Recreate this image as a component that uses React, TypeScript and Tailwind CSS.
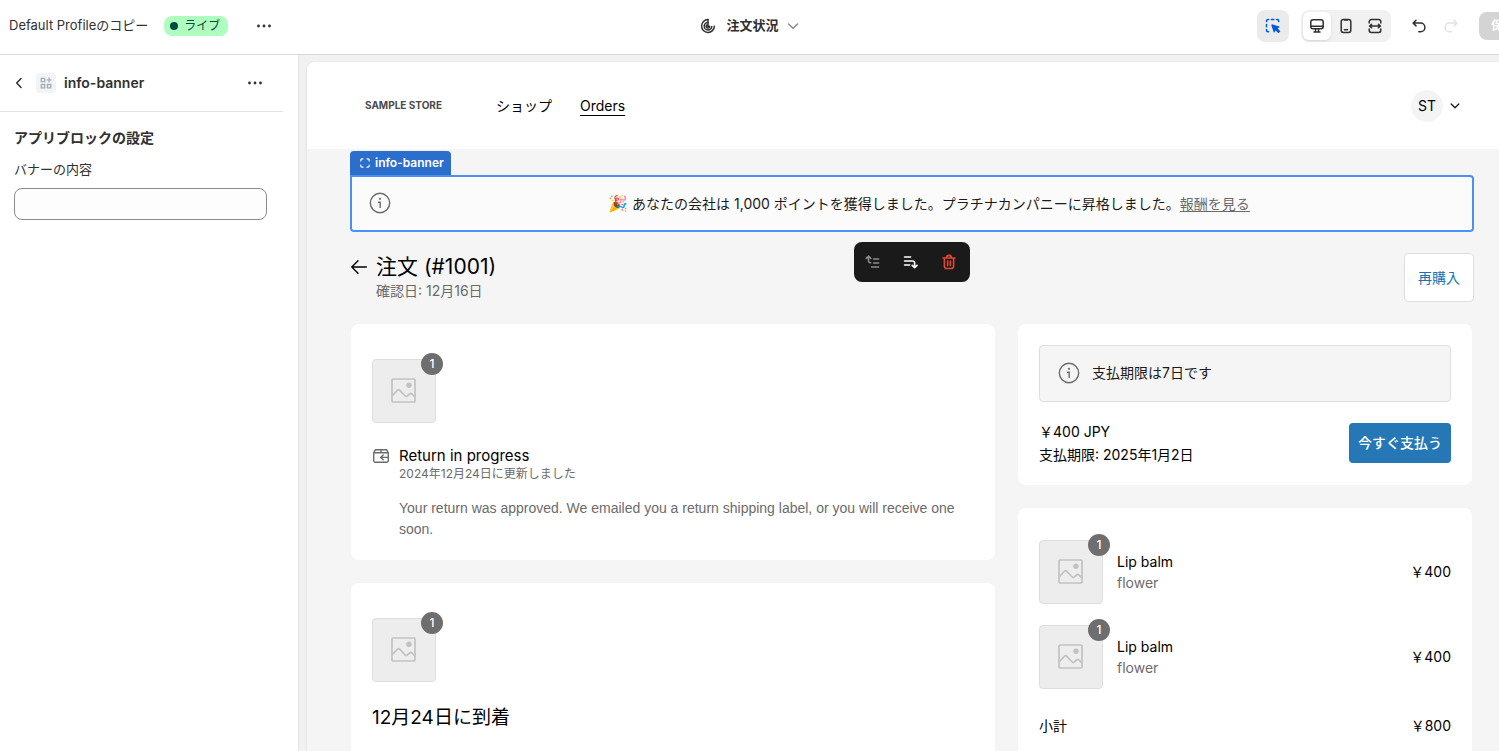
import type { ReactNode } from 'react'

interface IconProps {
  className?: string
}

interface LineItem {
  id: number
  name: string
  variant: string
  price: string
}

const LINE_ITEMS: LineItem[] = [
  { id: 1, name: 'Lip balm', variant: 'flower', price: '￥400' },
  { id: 2, name: 'Lip balm', variant: 'flower', price: '￥400' },
]

/* ---------- icons ---------- */

function DotsIcon() {
  return (
    <svg width="16" height="16" viewBox="0 0 16 16" fill="#303030">
      <circle cx="2.5" cy="8" r="1.4" />
      <circle cx="8" cy="8" r="1.4" />
      <circle cx="13.5" cy="8" r="1.4" />
    </svg>
  )
}

function ChevronDown({ className }: IconProps) {
  return (
    <svg className={className} width="12" height="12" viewBox="0 0 12 12" fill="none" stroke="currentColor" strokeWidth="1.5" strokeLinecap="round" strokeLinejoin="round">
      <path d="M1.5 4 6 8.3 10.5 4" />
    </svg>
  )
}

function OrderStatusIcon() {
  return (
    <svg width="16" height="16" viewBox="0 0 16 16" fill="none" stroke="#303030" strokeWidth="1.5" strokeLinecap="round">
      <path d="M8 1.6a6.4 6.4 0 1 0 6.4 6.6" />
      <path d="M8 4.4a3.8 3.8 0 1 0 3.8 4" />
      <path d="M8 1.6v6.6h1.4M9.6 8.4A1.7 1.7 0 1 1 8 6.7" />
    </svg>
  )
}

function InspectorIcon() {
  return (
    <svg width="16" height="16" viewBox="0 0 16 16" fill="none" stroke="#005bd3" strokeWidth="1.5" strokeLinecap="round">
      <path d="M1.5 3.6V3A1.5 1.5 0 0 1 3 1.5h.6M6.4 1.5h2.4M11.6 1.5h.6A1.5 1.5 0 0 1 13.7 3v.6M1.5 6.4v2.4M1.5 11.6v.6a1.5 1.5 0 0 0 1.5 1.5h.6" />
      <path d="M7 6.2 15 8.8l-2.3 1.7 2.7 2.8-2 2-2.8-2.7L9 15 6.2 7Z" fill="#005bd3" stroke="none" />
    </svg>
  )
}

function DesktopIcon() {
  return (
    <svg width="16" height="16" viewBox="0 0 16 16" fill="none" stroke="#303030" strokeWidth="1.5" strokeLinecap="round" strokeLinejoin="round">
      <rect x="1.8" y="1.8" width="12.4" height="9" rx="2.2" />
      <path d="M2 8.2h12M6.5 11v2.6M9.5 11v2.6M5 14h6" />
    </svg>
  )
}

function MobileIcon() {
  return (
    <svg width="16" height="16" viewBox="0 0 16 16" fill="none" stroke="#303030" strokeWidth="1.5" strokeLinecap="round">
      <rect x="3.2" y="1.5" width="9.6" height="13" rx="2.2" />
      <path d="M6.5 11.8h3M6.5 2h3" />
    </svg>
  )
}

function FullWidthIcon() {
  return (
    <svg width="16" height="16" viewBox="0 0 16 16" fill="none" stroke="#303030" strokeWidth="1.5" strokeLinecap="round" strokeLinejoin="round">
      <path d="M2.2 5V3.8a2.2 2.2 0 0 1 2.2-2.2h7.2a2.2 2.2 0 0 1 2.2 2.2V5M2.2 11v1.2a2.2 2.2 0 0 0 2.2 2.2h7.2a2.2 2.2 0 0 0 2.2-2.2V11" />
      <path d="M3 8h10M4.6 6.2 2.5 8l2.1 1.8M11.4 6.2 13.5 8l-2.1 1.8" />
    </svg>
  )
}

function UndoIcon({ className }: IconProps) {
  return (
    <svg className={className} width="16" height="16" viewBox="0 0 16 16" fill="none" stroke="currentColor" strokeWidth="1.5" strokeLinecap="round" strokeLinejoin="round">
      <path d="M5 2.3 2.2 5.1 5 7.9M2.4 5.1h7.2a4.3 4.3 0 0 1 0 8.6H7.8" />
    </svg>
  )
}

function AppBlockIcon() {
  return (
    <svg width="12" height="12" viewBox="0 0 12 12" fill="none" stroke="#a3acba" strokeWidth="1.3">
      <path d="M1.3 1.3h3.4v3.4H1.3zM1.3 7.5h3.4v3.4H1.3zM7.4 7.5h3.4v3.4H7.4zM9.1.6v4.6M6.8 2.9h4.6" />
    </svg>
  )
}

function InfoIcon() {
  return (
    <svg width="22" height="22" viewBox="0 0 22 22" fill="none" stroke="#6b6b6b" strokeWidth="1.4">
      <circle cx="11" cy="11" r="9.7" />
      <path d="M9 10.3h2.2v5.6" />
      <circle cx="11" cy="6.8" r="1.1" fill="#6b6b6b" stroke="none" />
    </svg>
  )
}

function ImageIcon() {
  return (
    <svg width="26" height="26" viewBox="0 0 26 26" fill="none" stroke="#c2c2c2" strokeWidth="1.7" strokeLinejoin="round">
      <rect x="1" y="1" width="23" height="23" rx="1" />
      <path d="M1.5 17.5 6.6 12.2q1-1 2 0l5.6 5.8q1 1 2 0l2.3-2q1.2-1 2.4 0l3 2.8" />
      <circle cx="18" cy="7.3" r="2.7" fill="#c2c2c2" stroke="none" />
    </svg>
  )
}

function ReturnIcon() {
  return (
    <svg width="18" height="16" viewBox="0 0 18 16" fill="none" stroke="#6b6b6b" strokeWidth="1.4" strokeLinecap="round" strokeLinejoin="round">
      <path d="M1.7 4.8 3.3 1.8h11.4l1.6 3v8a1.5 1.5 0 0 1-1.5 1.5H3.2a1.5 1.5 0 0 1-1.5-1.5ZM1.7 4.8h14.6M9 1.8v3M8.6 9.4H16M11.2 7 8.6 9.4l2.6 2.4" />
    </svg>
  )
}

function MoveUpIcon() {
  return (
    <svg width="16" height="16" viewBox="0 0 16 16" fill="none" stroke="#8a8a8a" strokeWidth="1.6" strokeLinecap="round" strokeLinejoin="round">
      <path d="M1.2 4.4 3.5 2.2l2.3 2.2M3.5 2.8v4a1.9 1.9 0 0 0 1.9 1.9h.3M8.6 5h5M8.6 9h5M6.6 13h7" />
    </svg>
  )
}

function MoveDownIcon() {
  return (
    <svg width="16" height="16" viewBox="0 0 16 16" fill="none" stroke="#ffffff" strokeWidth="1.6" strokeLinecap="round" strokeLinejoin="round">
      <path d="M1.6 3h6M1.6 7h8a2 2 0 0 1 2 2v4.6M1.6 11h5M9.2 11.4l2.4 2.3 2.4-2.3" />
    </svg>
  )
}

function TrashIcon() {
  return (
    <svg width="16" height="16" viewBox="0 0 16 16" fill="none" stroke="#e5482d" strokeWidth="1.6" strokeLinecap="round" strokeLinejoin="round">
      <path d="M2 4h12M5.6 3.8a2.4 2.4 0 0 1 4.8 0M3.4 4.2v8a2.3 2.3 0 0 0 2.3 2.3h4.6a2.3 2.3 0 0 0 2.3-2.3v-8M6.6 7v4.6M9.4 7v4.6" />
    </svg>
  )
}

/* ---------- top bar ---------- */

function TopBar() {
  return (
    <header className="relative z-10 grid h-[55px] shrink-0 grid-cols-[1fr_auto_1fr] items-center overflow-hidden border-b border-[#d9d9d9] bg-white pb-[3px] text-[13px] text-[#303030]">
      <div className="flex items-center pl-[9px]">
        <span className="whitespace-nowrap">Default Profileのコピー</span>
        <span className="ml-4 flex h-5 w-16 items-center gap-[6px] rounded-lg bg-[#affebf] pl-[6px] text-xs text-[#014b40]">
          <span className="size-2 rounded-full bg-[#014b40]" />
          ライブ
        </span>
        <button type="button" aria-label="その他" className="ml-7">
          <DotsIcon />
        </button>
      </div>
      <button type="button" className="flex items-center font-semibold">
        <OrderStatusIcon />
        <span className="ml-[10px]">注文状況</span>
        <ChevronDown className="ml-2 text-[#8a8a8a]" />
      </button>
      <div className="flex items-center justify-end">
        <button type="button" aria-label="インスペクター" className="grid size-8 place-items-center rounded-lg bg-[#ebebeb]">
          <InspectorIcon />
        </button>
        <div className="ml-3 flex h-8 items-center gap-px rounded-lg bg-[#f1f1f1] p-[2px]">
          <button type="button" aria-label="デスクトップ" className="grid size-7 place-items-center rounded-md bg-white shadow-sm">
            <DesktopIcon />
          </button>
          <button type="button" aria-label="モバイル" className="grid size-7 place-items-center">
            <MobileIcon />
          </button>
          <button type="button" aria-label="全画面" className="grid size-7 place-items-center">
            <FullWidthIcon />
          </button>
        </div>
        <button type="button" aria-label="元に戻す" className="ml-[14px] grid size-7 place-items-center">
          <UndoIcon className="text-[#303030]" />
        </button>
        <button type="button" aria-label="やり直す" disabled className="ml-1 grid size-7 place-items-center">
          <UndoIcon className="-scale-x-100 text-[#e3e3e3]" />
        </button>
        <div className="ml-[14px] w-5 overflow-hidden">
          <button type="button" disabled className="h-7 w-14 rounded-lg bg-[#d4d4d4] pl-3 text-left text-xs font-semibold text-white">
            保存
          </button>
        </div>
      </div>
    </header>
  )
}

/* ---------- settings sidebar ---------- */

function Sidebar() {
  return (
    <aside className="w-[299px] shrink-0 border-r border-[#e3e3e3] bg-white pr-[15px] text-[#303030]">
      <div className="flex h-[57px] items-center border-b border-[#e3e3e3] pl-[13px] pr-5">
        <button type="button" aria-label="戻る">
          <ChevronDown className="rotate-90" />
        </button>
        <span className="ml-[11px] grid size-5 place-items-center rounded bg-[#f3f4f6]">
          <AppBlockIcon />
        </span>
        <h2 className="ml-2 flex-1 text-sm font-semibold">info-banner</h2>
        <button type="button" aria-label="ブロックの操作">
          <DotsIcon />
        </button>
      </div>
      <div className="pl-[14px] pr-4 pt-4">
        <h3 className="text-sm font-semibold">アプリブロックの設定</h3>
        <label htmlFor="banner-content" className="mt-[11px] block text-[13px] leading-5">
          バナーの内容
        </label>
        <input
          id="banner-content"
          type="text"
          className="mt-[9px] block h-8 w-full rounded-lg border border-[#8a8a8a] bg-[#fdfdfd] px-3 text-[13px]"
        />
      </div>
    </aside>
  )
}

/* ---------- storefront preview ---------- */

function StoreHeader() {
  return (
    <header className="flex h-[87px] items-center rounded-tl-lg bg-white pl-[58px] pr-[38px] text-sm text-black">
      <span className="text-[10px] font-bold text-[#4a4a4a]">SAMPLE STORE</span>
      <nav className="ml-[54px] flex gap-7">
        <a href="#shop">ショップ</a>
        <a href="#orders" className="underline underline-offset-4">
          Orders
        </a>
      </nav>
      <button type="button" aria-label="アカウント" className="ml-auto flex items-center gap-[6px]">
        <span className="grid size-8 place-items-center rounded-full bg-[#f4f4f4]">ST</span>
        <svg width="12" height="12" viewBox="0 0 12 12" fill="none" stroke="#1a1a1a" strokeWidth="1.3" strokeLinecap="round" strokeLinejoin="round">
          <path d="M2.2 4 6 7.8 9.8 4" />
        </svg>
      </button>
    </header>
  )
}

function SelectedBlock() {
  return (
    <section className="relative pt-[2px]">
      <span className="flex h-6 w-[101px] items-center gap-[5px] rounded-t bg-[#2c6ecb] pl-[10px] text-xs font-semibold text-white">
        <svg width="10" height="10" viewBox="0 0 10 10" fill="none" stroke="#ffffff" strokeWidth="1.2" strokeLinecap="round">
          <path d="M.8 3V2A1.2 1.2 0 0 1 2 .8h1M7 .8h1A1.2 1.2 0 0 1 9.2 2v1M9.2 7v1A1.2 1.2 0 0 1 8 9.2H7M3 9.2H2A1.2 1.2 0 0 1 .8 8V7" />
        </svg>
        info-banner
      </span>
      <div className="flex h-[57px] items-center rounded-b rounded-tr border-2 border-[#4a90f5] bg-[#fbfbfb] px-[17px] pb-px text-sm text-[#1a1a1a]">
        <InfoIcon />
        <p className="flex-1 pl-3 text-center leading-5">
          <span className="text-base leading-5">🎉</span> あなたの会社は 1,000 ポイントを獲得しました。プラチナカンパニーに昇格しました。
          <a href="#rewards" className="text-[#6b6b6b] underline underline-offset-2">
            報酬を見る
          </a>
        </p>
      </div>
      {/* block actions float under the selection */}
      <div className="absolute left-1/2 top-full mt-[10px] flex h-10 w-[116px] -translate-x-1/2 items-center gap-[22px] rounded-lg bg-[#1a1a1a] pl-[11px]">
        <button type="button" aria-label="上に移動" disabled>
          <MoveUpIcon />
        </button>
        <button type="button" aria-label="下に移動">
          <MoveDownIcon />
        </button>
        <button type="button" aria-label="削除">
          <TrashIcon />
        </button>
      </div>
    </section>
  )
}

function Card({ children, className = '' }: { children: ReactNode; className?: string }) {
  return <section className={`rounded-lg bg-white px-[21px] ${className}`}>{children}</section>
}

function Thumbnail({ count }: { count: number }) {
  return (
    <div className="relative grid size-16 shrink-0 place-items-center rounded border border-[#dedede] bg-[#ededed]">
      <ImageIcon />
      <span className="absolute -right-2 -top-[7px] grid size-[22px] place-items-center rounded-full bg-[#6e6e6e] text-xs font-medium text-white">
        {count}
      </span>
    </div>
  )
}

function OrderTitle() {
  return (
    <div className="flex items-start pl-px pt-[21px]">
      <a href="#orders" aria-label="注文一覧に戻る" className="mt-[6px]">
        <svg width="16" height="16" viewBox="0 0 16 16" fill="none" stroke="#000000" strokeWidth="1.4" strokeLinecap="round" strokeLinejoin="round">
          <path d="M15.3 8H.9M7 1.8.8 8 7 14.2" />
        </svg>
      </a>
      <div className="ml-[9px]">
        <h1 className="text-[21px] leading-7 text-black">注文 (#1001)</h1>
        <p className="text-sm leading-5 text-[#6b6b6b]">確認日: 12月16日</p>
      </div>
      <button type="button" className="ml-auto h-[49px] w-[70px] rounded border border-[#dedede] bg-white text-sm text-[#1773b0]">
        再購入
      </button>
    </div>
  )
}

function ReturnCard() {
  return (
    <Card className="pb-5 pt-[35px]">
      <Thumbnail count={1} />
      <div className="mt-[23px] flex gap-[9px]">
        <span className="mt-[2px] shrink-0">
          <ReturnIcon />
        </span>
        <div>
          <h2 className="text-[15px] leading-5 text-black">Return in progress</h2>
          <p className="text-xs leading-4 text-[#6b6b6b]">2024年12月24日に更新しました</p>
          <p className="mt-4 font-['Liberation_Sans',sans-serif] text-sm leading-[21px] text-[#6b6b6b]">
            Your return was approved. We emailed you a return shipping label, or you will receive one soon.
          </p>
        </div>
      </div>
    </Card>
  )
}

function ArrivalCard() {
  return (
    <Card className="pb-10 pt-[35px]">
      <Thumbnail count={1} />
      <h2 className="mt-[22px] text-[19px] leading-7 text-black">12月24日に到着</h2>
    </Card>
  )
}

function PaymentCard() {
  return (
    <Card className="pb-[19px] pt-[21px]">
      <div className="flex h-[57px] items-center gap-3 rounded border border-[#dedede] bg-[#f5f5f5] px-[18px] pb-px text-sm text-[#1a1a1a]">
        <InfoIcon />
        支払期限は7日です
      </div>
      <div className="mt-[18px] flex items-center justify-between text-sm text-black">
        <div className="leading-[23px]">
          <p>￥400 JPY</p>
          <p>支払期限: 2025年1月2日</p>
        </div>
        <button type="button" className="h-10 w-[102px] rounded bg-[#2578b5] font-medium text-white">
          今すぐ支払う
        </button>
      </div>
    </Card>
  )
}

function SummaryCard() {
  return (
    <Card className="flex flex-col gap-[21px] pb-10 pt-8 text-sm text-black">
      {LINE_ITEMS.map((item) => (
        <div key={item.id} className="flex items-center">
          <Thumbnail count={1} />
          <div className="ml-[14px] flex-1 leading-[21px]">
            <p>{item.name}</p>
            <p className="text-[#6b6b6b]">{item.variant}</p>
          </div>
          <span>{item.price}</span>
        </div>
      ))}
      <div className="mt-[5px] flex justify-between leading-[21px]">
        <span>小計</span>
        <span>￥800</span>
      </div>
    </Card>
  )
}

export default function App() {
  return (
    <div className="flex h-screen flex-col overflow-hidden bg-[#f1f1f1] font-['Inter','Noto_Sans_CJK_JP',sans-serif]">
      <TopBar />
      <div className="flex min-h-0 flex-1">
        <Sidebar />
        <div className="min-w-0 flex-1 overflow-hidden pl-2 pt-[7px]">
          <div className="h-full overflow-hidden rounded-tl-lg bg-[#f5f5f5] shadow">
            <StoreHeader />
            <main className="pl-[43px] pr-[25px]">
              <SelectedBlock />
              <OrderTitle />
              <div className="grid grid-cols-[1fr_454px] items-start gap-[23px] pl-px pr-[2px] pt-[22px]">
                <div className="flex flex-col gap-[23px]">
                  <ReturnCard />
                  <ArrivalCard />
                </div>
                <div className="flex flex-col gap-[23px]">
                  <PaymentCard />
                  <SummaryCard />
                </div>
              </div>
            </main>
          </div>
        </div>
      </div>
    </div>
  )
}
